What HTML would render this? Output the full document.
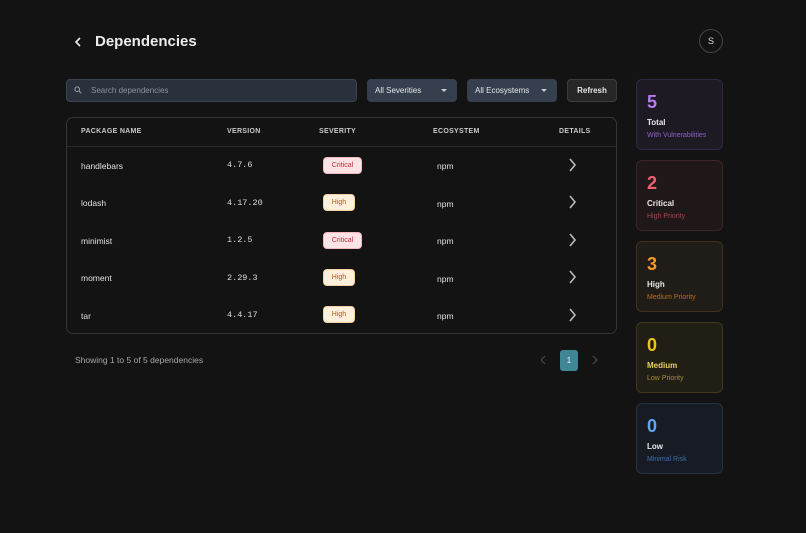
<!DOCTYPE html>
<html><head><meta charset="utf-8"><style>
*{box-sizing:border-box;margin:0;padding:0}
body{width:806px;height:533px;background:#131313;font-family:"Liberation Sans",sans-serif;color:#e5e5e5;position:relative;overflow:hidden}
.a{position:absolute}
.title{left:95px;top:33px;font-size:15px;font-weight:bold;color:#ececec}
.back{left:73px;top:35px}
.av{left:699px;top:29px;width:24px;height:24px;border:1px solid #444;border-radius:50%;font-size:9px;text-align:center;line-height:22px;color:#ddd}
.search{left:66px;top:79px;width:291px;height:23px;background:#2a313c;border:1px solid #3c4452;border-radius:4px;font-size:8px;color:#8a93a0;padding-left:24px;line-height:21px}
.sel{top:79px;width:90px;height:23px;background:#363f4d;border-radius:4px;font-size:8px;color:#e3e6ea;padding-left:8px;line-height:23px}
.sel:after{content:"";position:absolute;right:10px;top:10px;border:3px solid transparent;border-top:3px solid #c8ccd2}
.ref{left:567px;top:79px;width:50px;height:23px;background:#272727;border:1px solid #3c3c3c;border-radius:4px;font-size:8px;font-weight:bold;text-align:center;line-height:21px}
.tbl{left:66px;top:117px;width:551px;height:217px;border:1px solid #353535;border-radius:7px}
.hd{top:128px;font-size:7px;font-weight:bold;color:#c9c9c9;letter-spacing:.3px}
.hl{left:67px;top:146px;width:549px;height:1px;background:#2a2a2a}
.c{font-size:8.5px;color:#e0e0e0}
.v{font-family:"Liberation Mono",monospace;font-size:8.5px;color:#ddd}
.b{width:39px;height:17px;border-radius:4px;font-size:7px;text-align:center;line-height:16px}
.cr{background:#fde3e6;color:#c62b3b;border:1px solid #f4b8c0}
.hi{background:#fff0dc;color:#c2541b;width:32px;border:1px solid #f5d0a3}
.card{left:636px;width:87px;height:71px;border-radius:6px;padding:12px 10px}
.n{font-size:18px;font-weight:bold;line-height:20px}
.l{font-size:8px;font-weight:bold;color:#e8e8e8;margin-top:6px}
.s{font-size:7px;margin-top:5px}
</style></head><body>
<svg class="a back" width="10" height="14" viewBox="0 0 10 14"><path d="M7 3L3 7l4 4" stroke="#eee" stroke-width="1.6" fill="none"/></svg>
<div class="a title">Dependencies</div>
<div class="a av">S</div>
<div class="a search">Search dependencies</div>
<svg class="a" style="left:74px;top:86px" width="8" height="8" viewBox="0 0 8 8"><circle cx="3.2" cy="3.2" r="2.3" stroke="#9aa2ad" fill="none" stroke-width="1"/><path d="M5 5l2.3 2.3" stroke="#9aa2ad" stroke-width="1"/></svg>
<div class="a sel" style="left:367px">All Severities</div>
<div class="a sel" style="left:467px">All Ecosystems</div>
<div class="a ref">Refresh</div>
<div class="a tbl"></div>
<div class="a hd" style="left:81px">PACKAGE NAME</div>
<div class="a hd" style="left:227px">VERSION</div>
<div class="a hd" style="left:319px">SEVERITY</div>
<div class="a hd" style="left:433px">ECOSYSTEM</div>
<div class="a hd" style="left:559px">DETAILS</div>
<div class="a hl"></div>

<div class="a c" style="left:81px;top:161px">handlebars</div><div class="a v" style="left:227px;top:160px">4.7.6</div><div class="a b cr" style="left:323px;top:157px">Critical</div><div class="a c" style="left:437px;top:161px">npm</div>
<div class="a c" style="left:81px;top:198px">lodash</div><div class="a v" style="left:227px;top:198px">4.17.20</div><div class="a b hi" style="left:323px;top:194px">High</div><div class="a c" style="left:437px;top:199px">npm</div>
<div class="a c" style="left:81px;top:236px">minimist</div><div class="a v" style="left:227px;top:235px">1.2.5</div><div class="a b cr" style="left:323px;top:232px">Critical</div><div class="a c" style="left:437px;top:236px">npm</div>
<div class="a c" style="left:81px;top:273px">moment</div><div class="a v" style="left:227px;top:273px">2.29.3</div><div class="a b hi" style="left:323px;top:269px">High</div><div class="a c" style="left:437px;top:274px">npm</div>
<div class="a c" style="left:81px;top:311px">tar</div><div class="a v" style="left:227px;top:310px">4.4.17</div><div class="a b hi" style="left:323px;top:306px">High</div><div class="a c" style="left:437px;top:311px">npm</div>
<svg class="a" style="left:566px;top:155px" width="14" height="170" viewBox="0 0 14 170"><g stroke="#bbb" stroke-width="1.6" fill="none"><path d="M4 4l5 6-5 6"/><path d="M4 41l5 6-5 6"/><path d="M4 79l5 6-5 6"/><path d="M4 116l5 6-5 6"/><path d="M4 154l5 6-5 6"/></g></svg>

<div class="a c" style="left:75px;top:355px;color:#a8a8a8">Showing 1 to 5 of 5 dependencies</div>
<svg class="a" style="left:538px;top:355px" width="62" height="10" viewBox="0 0 62 10"><g stroke="#4a4a4a" stroke-width="1.2" fill="none"><path d="M7 1L3 5l4 4"/><path d="M55 1l4 4-4 4"/></g></svg>
<div class="a" style="left:560px;top:350px;width:18px;height:21px;background:#3f8797;border-radius:3px;font-size:8px;color:#e8f4f6;text-align:center;line-height:21px">1</div>

<div class="a card" style="top:79px;background:#1d1a24;border:1px solid #302844"><div class="n" style="color:#b57cf0">5</div><div class="l">Total</div><div class="s" style="color:#8d62c2">With Vulnerabilities</div></div>
<div class="a card" style="top:160px;background:#201818;border:1px solid #3d2528"><div class="n" style="color:#ef6070">2</div><div class="l">Critical</div><div class="s" style="color:#a84450">High Priority</div></div>
<div class="a card" style="top:241px;background:#201c17;border:1px solid #3f311f"><div class="n" style="color:#f59a2a">3</div><div class="l">High</div><div class="s" style="color:#b8701f">Medium Priority</div></div>
<div class="a card" style="top:322px;background:#201e15;border:1px solid #40381b"><div class="n" style="color:#ecc41a">0</div><div class="l" style="color:#e8d060">Medium</div><div class="s" style="color:#a8902a">Low Priority</div></div>
<div class="a card" style="top:403px;background:#171c24;border:1px solid #243044"><div class="n" style="color:#5fa6ee">0</div><div class="l">Low</div><div class="s" style="color:#3e6ea8">Minimal Risk</div></div>
</body></html>
